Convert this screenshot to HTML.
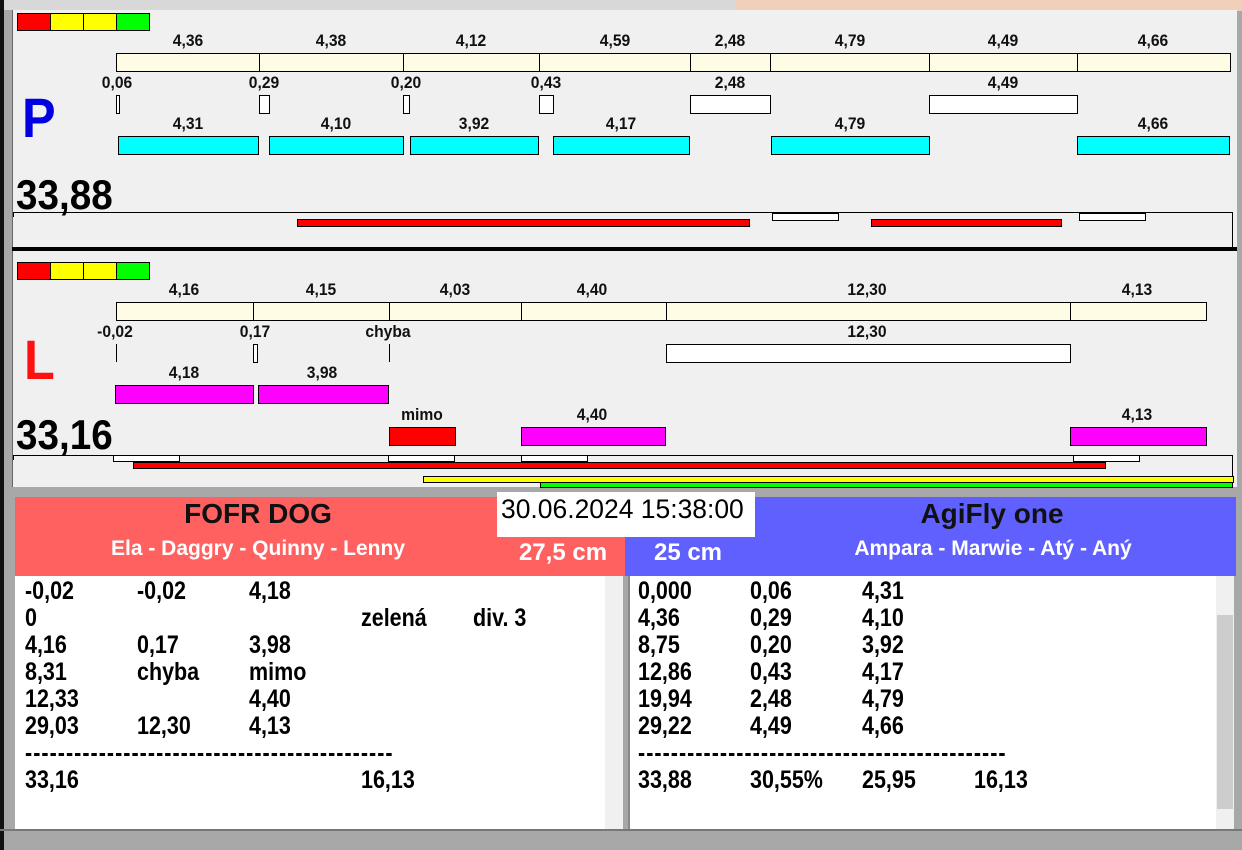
<!DOCTYPE html>
<html><head><meta charset="utf-8"><style>
*{margin:0;padding:0;box-sizing:border-box}
body{width:1242px;height:850px;background:#a8a8a8;position:relative;overflow:hidden;font-family:"Liberation Sans",sans-serif;font-weight:bold}
div{position:absolute}
.b{border:1px solid #000}
.cr{background:#fffce6}
.w{background:#fff}
.cy{background:#00ffff}
.mg{background:#ff00ff}
.rd{background:#ff0000}
.c{font-size:17px;line-height:17px;transform:translateX(-50%) scaleX(.92);white-space:nowrap;color:#111}
.l{font-size:25px;line-height:24px;white-space:nowrap;color:#000;transform:scaleX(.86);transform-origin:left}
.big{font-size:42px;line-height:40px;color:#000;transform:scaleX(.92);transform-origin:left}
.d{letter-spacing:1.2px}
</style></head><body>
<div style="left:0;top:0;width:1242px;height:10px;background:#d8d8d8"></div>
<div style="left:735px;top:0;width:507px;height:11px;background:#f0d0b8"></div>
<div style="left:0;top:0;width:4px;height:850px;background:#111"></div>
<!-- P panel -->
<div style="left:12px;top:10px;width:1225px;height:238px;background:#f0f0f0;border-left:1px solid #666"></div>
<div class="b rd" style="left:17px;top:13px;width:34px;height:18px"></div>
<div class="b" style="left:50px;top:13px;width:34px;height:18px;background:#ffff00"></div>
<div class="b" style="left:83px;top:13px;width:34px;height:18px;background:#ffff00"></div>
<div class="b" style="left:116px;top:13px;width:34px;height:18px;background:#00ff00"></div>

<div class="b cr" style="left:116px;top:53px;width:144px;height:19px"></div>
<div class="b cr" style="left:259px;top:53px;width:145px;height:19px"></div>
<div class="b cr" style="left:403px;top:53px;width:137px;height:19px"></div>
<div class="b cr" style="left:539px;top:53px;width:152px;height:19px"></div>
<div class="b cr" style="left:690px;top:53px;width:81px;height:19px"></div>
<div class="b cr" style="left:770px;top:53px;width:160px;height:19px"></div>
<div class="b cr" style="left:929px;top:53px;width:149px;height:19px"></div>
<div class="b cr" style="left:1077px;top:53px;width:154px;height:19px"></div>
<div class="c" style="left:188px;top:32px">4,36</div>
<div class="c" style="left:331px;top:32px">4,38</div>
<div class="c" style="left:471px;top:32px">4,12</div>
<div class="c" style="left:615px;top:32px">4,59</div>
<div class="c" style="left:730px;top:32px">2,48</div>
<div class="c" style="left:850px;top:32px">4,79</div>
<div class="c" style="left:1003px;top:32px">4,49</div>
<div class="c" style="left:1153px;top:32px">4,66</div>

<div class="c" style="left:117px;top:74px">0,06</div>
<div class="c" style="left:264px;top:74px">0,29</div>
<div class="c" style="left:406px;top:74px">0,20</div>
<div class="c" style="left:546px;top:74px">0,43</div>
<div class="c" style="left:730px;top:74px">2,48</div>
<div class="c" style="left:1003px;top:74px">4,49</div>
<div class="b w" style="left:116px;top:95px;width:4px;height:19px"></div>
<div class="b w" style="left:259px;top:95px;width:11px;height:19px"></div>
<div class="b w" style="left:403px;top:95px;width:7px;height:19px"></div>
<div class="b w" style="left:539px;top:95px;width:15px;height:19px"></div>
<div class="b w" style="left:690px;top:95px;width:81px;height:19px"></div>
<div class="b w" style="left:929px;top:95px;width:149px;height:19px"></div>

<div class="c" style="left:188px;top:115px">4,31</div>
<div class="c" style="left:336px;top:115px">4,10</div>
<div class="c" style="left:474px;top:115px">3,92</div>
<div class="c" style="left:621px;top:115px">4,17</div>
<div class="c" style="left:850px;top:115px">4,79</div>
<div class="c" style="left:1153px;top:115px">4,66</div>
<div class="b cy" style="left:118px;top:136px;width:141px;height:19px"></div>
<div class="b cy" style="left:269px;top:136px;width:135px;height:19px"></div>
<div class="b cy" style="left:410px;top:136px;width:129px;height:19px"></div>
<div class="b cy" style="left:553px;top:136px;width:137px;height:19px"></div>
<div class="b cy" style="left:771px;top:136px;width:159px;height:19px"></div>
<div class="b cy" style="left:1077px;top:136px;width:153px;height:19px"></div>

<div style="left:22px;top:88px;font-size:56px;line-height:60px;color:#0000e0;transform:scaleX(.9);transform-origin:left">P</div>
<div class="big" style="left:16px;top:175px">33,88</div>
<div style="left:13px;top:212px;width:1220px;height:1px;background:#000"></div>
<div style="left:13px;top:212px;width:1px;height:5px;background:#000"></div>
<div style="left:1232px;top:212px;width:1px;height:36px;background:#000"></div>
<div class="b rd" style="left:297px;top:219px;width:453px;height:8px"></div>
<div class="b rd" style="left:871px;top:219px;width:191px;height:8px"></div>
<div class="b w" style="left:772px;top:213px;width:67px;height:8px"></div>
<div class="b w" style="left:1079px;top:213px;width:67px;height:8px"></div>
<div style="left:12px;top:247px;width:1225px;height:4px;background:#000"></div>

<!-- L panel -->
<div style="left:12px;top:251px;width:1225px;height:236px;background:#f0f0f0;border-left:1px solid #666"></div>
<div class="b rd" style="left:17px;top:262px;width:34px;height:18px"></div>
<div class="b" style="left:50px;top:262px;width:34px;height:18px;background:#ffff00"></div>
<div class="b" style="left:83px;top:262px;width:34px;height:18px;background:#ffff00"></div>
<div class="b" style="left:116px;top:262px;width:34px;height:18px;background:#00ff00"></div>

<div class="c" style="left:184px;top:281px">4,16</div>
<div class="c" style="left:321px;top:281px">4,15</div>
<div class="c" style="left:455px;top:281px">4,03</div>
<div class="c" style="left:592px;top:281px">4,40</div>
<div class="c" style="left:867px;top:281px">12,30</div>
<div class="c" style="left:1137px;top:281px">4,13</div>
<div class="b cr" style="left:116px;top:302px;width:138px;height:19px"></div>
<div class="b cr" style="left:253px;top:302px;width:137px;height:19px"></div>
<div class="b cr" style="left:389px;top:302px;width:133px;height:19px"></div>
<div class="b cr" style="left:521px;top:302px;width:146px;height:19px"></div>
<div class="b cr" style="left:666px;top:302px;width:405px;height:19px"></div>
<div class="b cr" style="left:1070px;top:302px;width:137px;height:19px"></div>

<div class="c" style="left:115px;top:323px">-0,02</div>
<div class="c" style="left:255px;top:323px">0,17</div>
<div class="c" style="left:388px;top:323px">chyba</div>
<div class="c" style="left:867px;top:323px">12,30</div>
<div style="left:116px;top:344px;width:1px;height:18px;background:#000"></div>
<div class="b w" style="left:253px;top:344px;width:5px;height:19px"></div>
<div style="left:389px;top:344px;width:1px;height:18px;background:#000"></div>
<div class="b w" style="left:666px;top:344px;width:405px;height:19px"></div>

<div class="c" style="left:184px;top:364px">4,18</div>
<div class="c" style="left:322px;top:364px">3,98</div>
<div class="b mg" style="left:115px;top:385px;width:139px;height:19px"></div>
<div class="b mg" style="left:258px;top:385px;width:131px;height:19px"></div>

<div class="c" style="left:422px;top:406px">mimo</div>
<div class="c" style="left:592px;top:406px">4,40</div>
<div class="c" style="left:1137px;top:406px">4,13</div>
<div class="b rd" style="left:389px;top:427px;width:67px;height:19px"></div>
<div class="b mg" style="left:521px;top:427px;width:145px;height:19px"></div>
<div class="b mg" style="left:1070px;top:427px;width:137px;height:19px"></div>

<div style="left:24px;top:330px;font-size:56px;line-height:60px;color:#ff1010;transform:scaleX(.9);transform-origin:left">L</div>
<div class="big" style="left:16px;top:415px">33,16</div>
<div style="left:13px;top:455px;width:1220px;height:1px;background:#000"></div>
<div style="left:13px;top:455px;width:1px;height:5px;background:#000"></div>
<div style="left:1232px;top:455px;width:1px;height:32px;background:#000"></div>
<div class="b w" style="left:113px;top:455px;width:67px;height:7px"></div>
<div class="b w" style="left:388px;top:455px;width:67px;height:7px"></div>
<div class="b w" style="left:521px;top:455px;width:67px;height:7px"></div>
<div class="b w" style="left:1073px;top:455px;width:67px;height:7px"></div>
<div class="b rd" style="left:133px;top:462px;width:973px;height:7px"></div>
<div class="b" style="left:423px;top:476px;width:811px;height:7px;background:#ffff00"></div>
<div class="b" style="left:540px;top:482px;width:693px;height:6px;background:#00ff00"></div>

<!-- bottom -->
<div style="left:15px;top:497px;width:610px;height:79px;background:#ff6161"></div>
<div style="left:625px;top:497px;width:611px;height:79px;background:#6060ff"></div>
<div style="left:497px;top:492px;width:258px;height:45px;background:#fff"></div>
<div style="left:501px;top:494px;font-size:27px;line-height:30px;font-weight:normal;white-space:nowrap;transform:scaleX(.98);transform-origin:left">30.06.2024 15:38:00</div>
<div class="c" style="left:258px;top:499px;font-size:28px;line-height:30px;transform:translateX(-50%)">FOFR DOG</div>
<div class="c" style="left:992px;top:499px;font-size:28px;line-height:30px;transform:translateX(-50%)">AgiFly one</div>
<div class="c" style="left:258px;top:538px;font-size:21px;line-height:22px;color:#fff;transform:translateX(-50%)">Ela - Daggry - Quinny - Lenny</div>
<div class="c" style="left:993px;top:538px;font-size:21px;line-height:22px;color:#fff;transform:translateX(-50%)">Ampara - Marwie - Atý - Aný</div>
<div class="c" style="left:563px;top:540px;font-size:24px;line-height:25px;color:#fff;transform:translateX(-50%)">27,5 cm</div>
<div class="c" style="left:688px;top:540px;font-size:24px;line-height:25px;color:#fff;transform:translateX(-50%)">25 cm</div>

<div style="left:15px;top:576px;width:590px;height:253px;background:#fff"></div>
<div style="left:605px;top:576px;width:18px;height:253px;background:#f0f0f0"></div>
<div style="left:628px;top:576px;width:588px;height:253px;background:#fff;border-left:2px solid #888"></div>
<div style="left:1216px;top:576px;width:18px;height:253px;background:#f0f0f0"></div>
<div style="left:1217px;top:615px;width:16px;height:194px;background:#cdcdcd"></div>
<div style="left:0;top:829px;width:1242px;height:2px;background:#777"></div>

<div class="l" style="left:25px;top:579px">-0,02</div><div class="l" style="left:137px;top:579px">-0,02</div><div class="l" style="left:249px;top:579px">4,18</div>
<div class="l" style="left:25px;top:606px">0</div><div class="l" style="left:361px;top:606px">zelená</div><div class="l" style="left:473px;top:606px">div. 3</div>
<div class="l" style="left:25px;top:633px">4,16</div><div class="l" style="left:137px;top:633px">0,17</div><div class="l" style="left:249px;top:633px">3,98</div>
<div class="l" style="left:25px;top:660px">8,31</div><div class="l" style="left:137px;top:660px">chyba</div><div class="l" style="left:249px;top:660px">mimo</div>
<div class="l" style="left:25px;top:687px">12,33</div><div class="l" style="left:249px;top:687px">4,40</div>
<div class="l" style="left:25px;top:714px">29,03</div><div class="l" style="left:137px;top:714px">12,30</div><div class="l" style="left:249px;top:714px">4,13</div>
<div class="l d" style="left:25px;top:741px">---------------------------------------------</div>
<div class="l" style="left:25px;top:768px">33,16</div><div class="l" style="left:361px;top:768px">16,13</div>

<div class="l" style="left:638px;top:579px">0,000</div><div class="l" style="left:750px;top:579px">0,06</div><div class="l" style="left:862px;top:579px">4,31</div>
<div class="l" style="left:638px;top:606px">4,36</div><div class="l" style="left:750px;top:606px">0,29</div><div class="l" style="left:862px;top:606px">4,10</div>
<div class="l" style="left:638px;top:633px">8,75</div><div class="l" style="left:750px;top:633px">0,20</div><div class="l" style="left:862px;top:633px">3,92</div>
<div class="l" style="left:638px;top:660px">12,86</div><div class="l" style="left:750px;top:660px">0,43</div><div class="l" style="left:862px;top:660px">4,17</div>
<div class="l" style="left:638px;top:687px">19,94</div><div class="l" style="left:750px;top:687px">2,48</div><div class="l" style="left:862px;top:687px">4,79</div>
<div class="l" style="left:638px;top:714px">29,22</div><div class="l" style="left:750px;top:714px">4,49</div><div class="l" style="left:862px;top:714px">4,66</div>
<div class="l d" style="left:638px;top:741px">---------------------------------------------</div>
<div class="l" style="left:638px;top:768px">33,88</div><div class="l" style="left:750px;top:768px">30,55%</div><div class="l" style="left:862px;top:768px">25,95</div><div class="l" style="left:974px;top:768px">16,13</div>
</body></html>
